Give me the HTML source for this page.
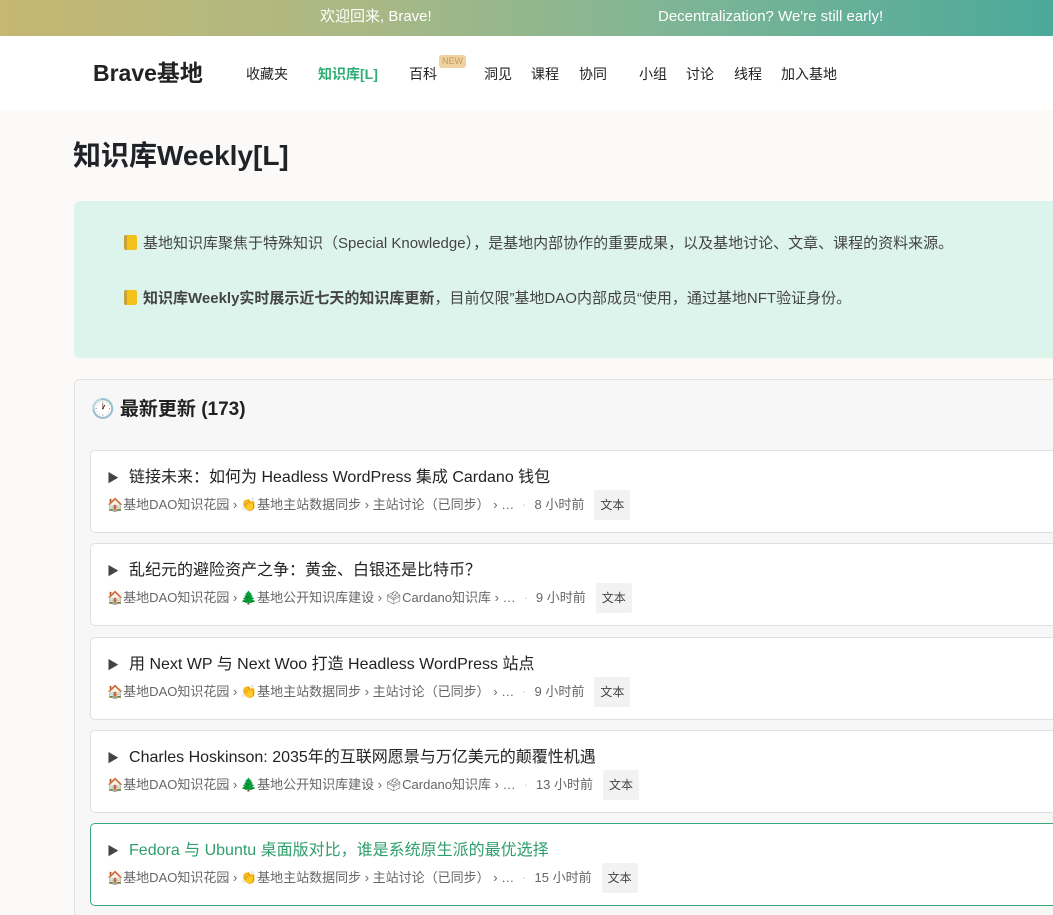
<!DOCTYPE html>
<html><head><meta charset="utf-8"><style>
*{margin:0;padding:0;box-sizing:border-box}
html,body{width:1053px;height:915px;overflow:hidden}
body{background:#fbfaf9;font-family:"Liberation Sans","Noto Sans CJK SC",sans-serif;color:#333;position:relative}
.top{height:36px;background:linear-gradient(90deg,#c6b772 0%,#a9b885 35%,#7db596 65%,#4ba99a 100%);color:#fff;font-size:15px;position:relative}
.top span{position:absolute;top:0;line-height:34px}
.hdr{height:74px;background:#fff;position:relative}
.logo{position:absolute;left:93px;top:20px;font-size:23px;line-height:34px;font-weight:bold;color:#222}
.nav{position:absolute;top:28px;font-size:14px;line-height:20px;color:#222}
.new{position:absolute;left:439px;top:19px;font-size:9px;line-height:11px;background:#f0d2a0;border-radius:3px;padding:1px 3px;color:#c9995a}
h1{position:absolute;left:73px;top:136px;font-size:28px;line-height:40px;font-weight:bold;color:#1f2328}
.info{position:absolute;left:74px;top:201px;width:1000px;height:157px;background:#ddf4ec;border-radius:6px;font-size:15px;line-height:20px;color:#444}
.info p{position:absolute;left:50px}
.bk{display:inline-block;width:13px;height:15px;background:#f3c21a;border-left:3px solid #c9a13a;border-radius:2px;vertical-align:-2px;margin-right:6px}
.panel{position:absolute;left:74px;top:379px;width:979px;height:536px;background:#f7f7f7;border:1px solid #e2e2e2;border-bottom:none;border-right:none;border-radius:6px 0 0 0;overflow:hidden}
.ph{position:absolute;left:16px;top:17px;font-size:19px;line-height:26px;font-weight:bold;color:#222}
.card{position:absolute;left:15px;width:1000px;height:83px;background:#fff;border:1px solid #e0e0e0;border-radius:5px}
.card .t{position:absolute;left:16px;top:16px;font-size:16px;line-height:22px;color:#222}
.card .t b{font-size:12px;color:#444;margin-right:10px;font-weight:normal}
.card .m{position:absolute;left:16px;top:39px;font-size:13px;line-height:30px;color:#666;white-space:nowrap}
.tag{display:inline-block;background:#f2f2f2;padding:0 6px;line-height:30px;font-size:12px;color:#444;margin-left:10px;border-radius:2px}
.dot{color:#ccc;margin:0 8px}
</style></head><body>
<div class="top"><span style="left:320px">欢迎回来, Brave!</span><span style="left:658px">Decentralization? We're still early!</span></div>
<div class="hdr">
<div class="logo">Brave基地</div>
<span class="nav" style="left:246px">收藏夹</span>
<span class="nav" style="left:318px;color:#2eae72;font-weight:bold">知识库[L]</span>
<span class="nav" style="left:409px">百科</span><span class="new">NEW</span>
<span class="nav" style="left:484px">洞见</span>
<span class="nav" style="left:531px">课程</span>
<span class="nav" style="left:579px">协同</span>
<span class="nav" style="left:639px">小组</span>
<span class="nav" style="left:686px">讨论</span>
<span class="nav" style="left:734px">线程</span>
<span class="nav" style="left:781px">加入基地</span>
</div>
<h1>知识库Weekly[L]</h1>
<div class="info">
<p style="top:33px"><i class="bk"></i>基地知识库聚焦于特殊知识（Special Knowledge），是基地内部协作的重要成果，以及基地讨论、文章、课程的资料来源。</p>
<p style="top:88px"><i class="bk"></i><b>知识库Weekly实时展示近七天的知识库更新</b>，目前仅限”基地DAO内部成员“使用，通过基地NFT验证身份。</p>
</div>
<div class="panel">
<div class="ph">🕐 最新更新 (173)</div>
<div class="card" style="top:70px"><div class="t"><b>▶</b>链接未来：如何为 Headless WordPress 集成 Cardano 钱包</div><div class="m">🏠基地DAO知识花园 › 👏基地主站数据同步 › 主站讨论（已同步） › …<span class="dot">·</span>8 小时前<span class="tag">文本</span></div></div>
<div class="card" style="top:163px"><div class="t"><b>▶</b>乱纪元的避险资产之争：黄金、白银还是比特币？</div><div class="m">🏠基地DAO知识花园 › 🌲基地公开知识库建设 › 🗳Cardano知识库 › …<span class="dot">·</span>9 小时前<span class="tag">文本</span></div></div>
<div class="card" style="top:257px"><div class="t"><b>▶</b>用 Next WP 与 Next Woo 打造 Headless WordPress 站点</div><div class="m">🏠基地DAO知识花园 › 👏基地主站数据同步 › 主站讨论（已同步） › …<span class="dot">·</span>9 小时前<span class="tag">文本</span></div></div>
<div class="card" style="top:350px"><div class="t"><b>▶</b>Charles Hoskinson: 2035年的互联网愿景与万亿美元的颠覆性机遇</div><div class="m">🏠基地DAO知识花园 › 🌲基地公开知识库建设 › 🗳Cardano知识库 › …<span class="dot">·</span>13 小时前<span class="tag">文本</span></div></div>
<div class="card" style="top:443px;border-color:#3aa878"><div class="t" style="color:#2e9e6c"><b>▶</b>Fedora 与 Ubuntu 桌面版对比，谁是系统原生派的最优选择</div><div class="m">🏠基地DAO知识花园 › 👏基地主站数据同步 › 主站讨论（已同步） › …<span class="dot">·</span>15 小时前<span class="tag">文本</span></div></div>
</div>
</body></html>
